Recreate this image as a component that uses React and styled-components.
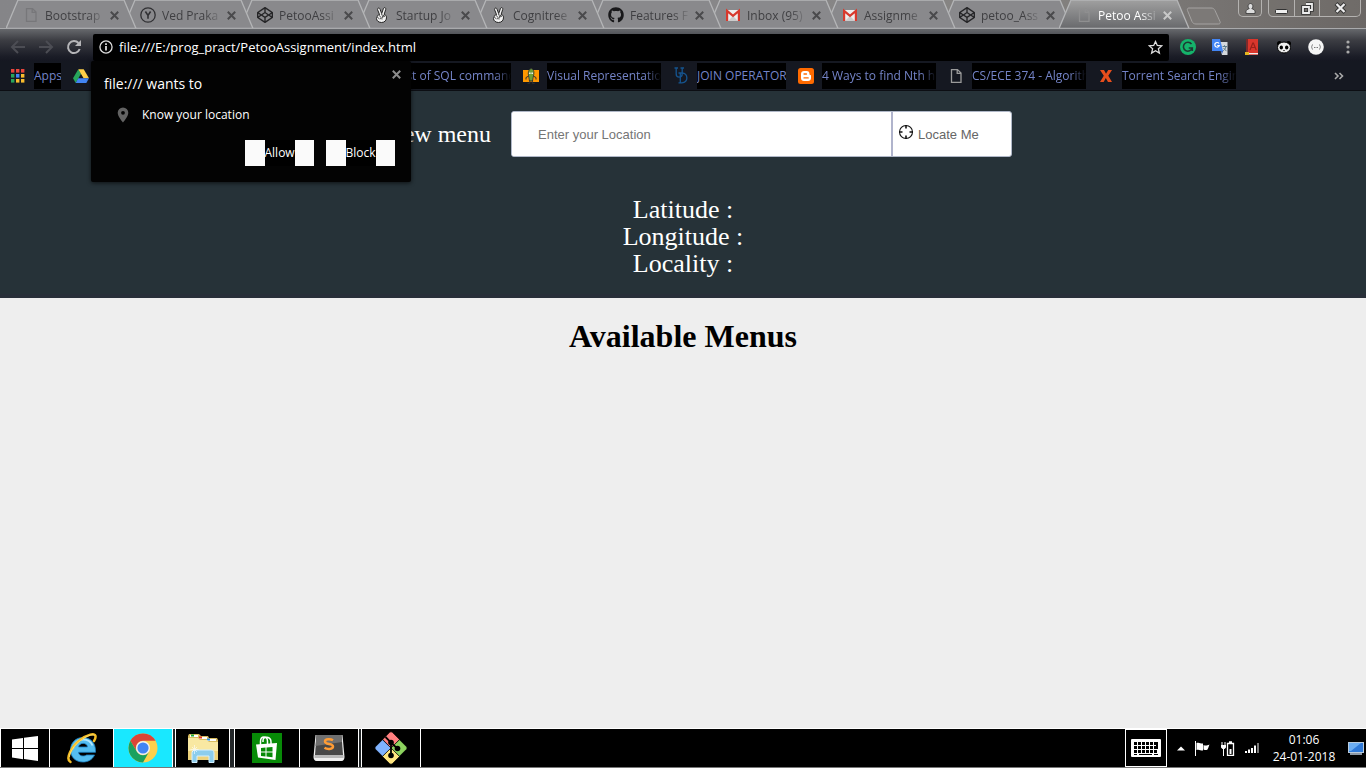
import React from "react";
import styled, { createGlobalStyle } from "styled-components";
import { FaGithub, FaCodepen } from "react-icons/fa";

const UI = `"Open Sans", "Noto Sans", sans-serif`;
const SERIF = `"Liberation Serif", "Times New Roman", serif`;
const SANS = `"Liberation Sans", Arial, sans-serif`;

const Global = createGlobalStyle`
  * { box-sizing: border-box; }
  body { margin: 0; background: #eeeeee; }
  button { border: 0; padding: 0; margin: 0; background: none; font: inherit; color: inherit; cursor: pointer; }
  a { color: inherit; text-decoration: none; }
  svg { display: block; flex: none; }
`;

const Screen = styled.div`
  display: flex;
  flex-direction: column;
  min-height: 100vh;
  overflow: hidden;
`;

/* ---------- browser window ---------- */

const BrowserChrome = styled.header`
  position: relative;
  font-family: ${UI};
  font-size: 12px;
`;

const TabStrip = styled.nav`
  display: flex;
  height: 29px;
  padding-left: 6px;
  background: linear-gradient(90deg, #858588, #89898d 40%, #858381 75%, #6b6765);
  border-bottom: 1px solid #a9aaac;
  overflow: hidden;
`;

const TabItem = styled.div`
  position: relative;
  z-index: ${(p) => p.$z};
  display: flex;
  align-items: center;
  flex: none;
  width: 117px;
  height: 29px;
  padding: 1px 4px 0 17px;
  color: ${(p) => (p.$active ? "#ffffff" : "#3f3f42")};
`;

const TabShape = styled.svg`
  position: absolute;
  left: 0;
  top: 0;
  z-index: -1;
`;

const TabLink = styled.a`
  display: flex;
  align-items: center;
  flex: 1;
  gap: 6px;
  min-width: 0;
`;

const FadeText = styled.span`
  flex: 1;
  min-width: 0;
  white-space: nowrap;
  overflow: hidden;
  mask-image: linear-gradient(90deg, #000 70%, transparent);
`;

const CloseButton = styled.button`
  display: flex;
  margin-left: 4px;
  color: ${(p) => p.$tone || "#4a4a4c"};
`;

const NewTab = styled.button`
  margin: 7px 0 0 10px;
  align-self: flex-start;
`;

const WindowControls = styled.div`
  display: flex;
  align-items: flex-start;
  gap: 6px;
  margin-left: auto;
  padding-right: 5px;
`;

const ControlGroup = styled.div`
  display: flex;
  height: 17px;
  border: 1px solid #b4b2b0;
  border-top: 0;
  border-radius: 0 0 5px 5px;
  background: #77746f55;
`;

const ControlButton = styled.button`
  display: flex;
  align-items: center;
  justify-content: center;
  width: ${(p) => p.$w}px;
  & + & { border-left: 1px solid #b4b2b0; }
`;

const Toolbar = styled.div`
  display: flex;
  align-items: center;
  height: 32px;
  padding: 4px 10px 0;
  background: linear-gradient(#66686c, #3c3d43 35%, #1b1d27 85%, #151721);
`;

const NavButtons = styled.div`
  display: flex;
  align-items: center;
  gap: 12px;
  width: 83px;
`;

const AddressBar = styled.form`
  display: flex;
  align-items: center;
  gap: 6px;
  flex: 1;
  height: 27px;
  padding: 0 6px;
  background: #000;
  border-radius: 2px;
`;

const AddressInput = styled.input`
  flex: 1;
  min-width: 0;
  height: 24px;
  padding: 0;
  border: 0;
  outline: 0;
  background: transparent;
  color: #fff;
  font: 13px ${UI};
`;

const Extensions = styled.div`
  display: flex;
  gap: 16px;
  padding-left: 11px;
`;

const BookmarkBar = styled.nav`
  display: flex;
  align-items: center;
  gap: 12px;
  height: 30px;
  padding: 0 22px 0 9px;
  background: #151821;
  border-bottom: 1px solid #0c0e13;
  color: #7484c8;
`;

const Bookmark = styled.a`
  display: flex;
  align-items: center;
  gap: 8px;
  flex: none;
`;

const BookmarkTitle = styled.span`
  display: flex;
  width: ${(p) => p.$w}px;
  height: 26px;
  line-height: 26px;
  background: ${(p) => (p.$blank ? "transparent" : "#000")};
`;

const BookmarkText = styled(FadeText)`
  mask-image: ${(p) => (p.$fade ? "linear-gradient(90deg, #000 86%, transparent)" : "none")};
`;

const Overflow = styled.button`
  margin-left: auto;
`;

/* ---------- location permission bubble ---------- */

const Bubble = styled.section`
  position: absolute;
  z-index: 20;
  top: 61px;
  left: 91px;
  width: 320px;
  height: 121px;
  padding: 12px 16px 16px 13px;
  display: flex;
  flex-direction: column;
  background: #030303;
  border-radius: 2px;
  box-shadow: 0 1px 4px #000000aa;
  color: #fff;
`;

const BubbleClose = styled.button`
  position: absolute;
  top: 9px;
  right: 10px;
  color: #8c8c8c;
`;

const BubbleTitle = styled.h2`
  margin: 0;
  font-size: 14px;
  font-weight: 400;
  line-height: 22px;
`;

const Permission = styled.p`
  display: flex;
  align-items: center;
  gap: 13px;
  margin: 12px 0 0 13px;
  line-height: 16px;
`;

const BubbleActions = styled.div`
  display: flex;
  justify-content: flex-end;
  gap: 12px;
  margin-top: auto;
`;

const BubbleButton = styled.button`
  display: flex;
  justify-content: center;
  width: 69px;
  height: 26px;
  line-height: 26px;
  background: #fafafa;
  span { background: #000; width: 30px; text-align: center; }
`;

/* ---------- web page ---------- */

const Hero = styled.section`
  display: flex;
  flex-direction: column;
  align-items: center;
  gap: 39px;
  padding: 20px 16px 17px;
  background: #263238;
  border-bottom: 4px solid #282f39;
  color: #fff;
  font-family: ${SERIF};
`;

const SearchForm = styled.form`
  display: flex;
  align-items: center;
  gap: 20px;
`;

const SearchLabel = styled.label`
  min-width: 137px;
  font-size: 24px;
  line-height: 46px;
  text-align: right;
`;

const SearchGroup = styled.div`
  display: flex;
  height: 46px;
  border: 1px solid #b0b8c8;
  border-radius: 3px;
  background: #fff;
  overflow: hidden;
`;

const LocationInput = styled.input`
  width: 379px;
  padding: 0 26px;
  border: 0;
  outline: 0;
  font: 13px ${SANS};
  &::placeholder { color: #757575; opacity: 1; }
`;

const LocateButton = styled.button`
  display: flex;
  align-items: center;
  gap: 4px;
  width: 120px;
  padding-left: 5px;
  border-left: 2px solid #b0b4cc;
  color: #666;
  font: 13px ${SANS};
  svg { margin-bottom: 4px; }
`;

const Facts = styled.ul`
  list-style: none;
  margin: 0;
  padding: 0;
  font-size: 26px;
  line-height: 27px;
  text-align: center;
`;

const Menus = styled.main`
  flex: 1;
  padding-top: 20px;
  background: #eeeeee;
`;

const MenusTitle = styled.h1`
  margin: 0;
  font: 700 32px/37px ${SERIF};
  color: #000;
  text-align: center;
`;

/* ---------- desktop taskbar ---------- */

const Taskbar = styled.footer`
  display: flex;
  height: 40px;
  border-top: 1px solid #fff;
  border-bottom: 1px solid #777;
  background: #000;
  color: #fff;
  font-family: ${UI};
`;

const TaskButton = styled.button`
  display: flex;
  align-items: center;
  justify-content: center;
  width: ${(p) => p.$w}px;
  margin-left: ${(p) => p.$gap || 0}px;
  background: ${(p) => p.$bg || "#000"};
  border-right: 1px solid #fff;
  border-left: ${(p) => (p.$left ? "1px solid #fff" : "0")};
  box-shadow: ${(p) => (p.$gap ? `-${p.$gap}px 0 #222628` : "none")};
`;

const Tray = styled.div`
  display: flex;
  align-items: center;
  gap: 10px;
  margin-left: auto;
  padding-right: 2px;
`;

const KeyboardButton = styled.button`
  display: flex;
  align-items: center;
  justify-content: center;
  width: 42px;
  height: 38px;
  border: 1px solid #fff;
`;

const Clock = styled.time`
  width: 68px;
  font-size: 12px;
  line-height: 17px;
  text-align: center;
`;

/* ---------- icons ---------- */

const Cross = ({ size = 9, w = 2 }) => (
  <svg width={size} height={size} viewBox="0 0 9 9" stroke="currentColor" strokeWidth={w}>
    <path d="M.8.8l7.4 7.4M8.2.8L.8 8.2" />
  </svg>
);
const Page = ({ c = "#9a9a9a" }) => (
  <svg width="16" height="16" viewBox="0 0 16 16" fill="none" stroke={c} strokeWidth="1.3">
    <path d="M3.5 1.6h6l3.5 3.5v9.3H3.5zM9.2 1.8v3.6h3.6" />
  </svg>
);
const YMark = () => (
  <svg width="16" height="16" viewBox="0 0 16 16" fill="none" stroke="#303033" strokeWidth="1.3">
    <circle cx="8" cy="8" r="7.2" />
    <path d="M5.4 4.5L8 8.4l2.6-3.9M8 8.2v3.6" strokeWidth="1.6" />
  </svg>
);
const Peace = () => (
  <svg width="16" height="16" viewBox="0 0 16 16" fill="#f2f2f2" stroke="#252525" strokeWidth="1" strokeLinejoin="round">
    <path d="M4.200 1.200c1-.5 1.500.1 1.900 1.200l1.600 4.200 1.600-4.700c.4-1.100 1-1.500 1.800-1.100.8.300.8 1.100.5 2L10.100 7.500c1.500.3 2.300 1.200 2.400 2.600.200 3-1.700 5.400-5 5.400-2.800 0-5-1.800-5-3.900 0-.8.300-1.400.9-1.700-.5-.9 0-1.700 1-1.900l1.200-.3L3.700 3c-.3-.8-.200-1.500.5-1.800z" />
    <path d="M3.400 10l2.200 2.300M5 8.200l2 2.300c.5.800-.4 1.500-1 .8M7 7.500l3.500 1.400c.6 1-1.500 1-2.500.5M9 10c-1 .6-1.300 1.500-1 2.500" fill="none" strokeWidth=".8" />
  </svg>
);
const Gmail = () => (
  <svg width="16" height="16" viewBox="0 0 16 16">
    <path fill="#eee" d="M1 3h14v11H1z" />
    <path fill="#ccc" d="M3 14l5-5 5 5z" />
    <path fill="none" stroke="#d8392d" strokeWidth="2.2" d="M2.1 14V3.8L8 8.8l5.9-5V14" />
  </svg>
);
const Drive = () => (
  <svg width="16" height="16" viewBox="0 0 16 16">
    <path fill="#27a45b" d="M5.3 1.2L0 10.3l2.7 4.6L8 5.8z" />
    <path fill="#ffcf48" d="M5.3 1.2h5.4l5.3 9.1h-5.4z" />
    <path fill="#4285f4" d="M5.3 10.3H16l-2.7 4.6H2.7z" />
  </svg>
);
const Apps = () => {
  const colors = ["#e8453c", "#e8453c", "#e8453c", "#27a45b", "#4285f4", "#f9bb2d", "#27a45b", "#f9bb2d", "#f9bb2d"];
  return (
    <svg width="17" height="16" viewBox="0 0 17 16">
      {colors.map((c, i) => (
        <rect key={i} x={2 + (i % 3) * 5} y={1 + Math.floor(i / 3) * 5} width="3.4" height="3.6" fill={c} />
      ))}
    </svg>
  );
};
const Mascot = () => (
  <svg width="16" height="16" viewBox="0 0 16 16">
    <path fill="#ff9800" d="M0 2h16v12H0z" />
    <path fill="#6d9f38" stroke="#333" strokeWidth=".8" d="M8 .6c3 .6 3.5 4 2.4 7.4L9.5 13h-3L5.6 8C4.7 4.5 5.5 1.5 8 .6z" />
    <path stroke="#333" fill="none" d="M5.8 8L3 9.500v2M10.200 8l2.800 1.500v2M6.800 12v3.300H4.500M9.300 12v3.300h2.300" />
    <path fill="#eee" d="M6 4.500h1.600v1.600H6zM8.400 4.500H10v1.600H8.400z" />
  </svg>
);
const UDMark = () => (
  <svg width="16" height="17" viewBox="0 0 16 17" fill="none" stroke="#15548f" strokeWidth="1.3">
    <path d="M1.500 1h3.500M7.500 1H11M3.200 1v6c0 4.200 6 4.200 6 0V1" />
    <path d="M5.500 6h3.500c6.500 0 6.500 9.800 0 9.800H5.500M7.300 6v9.800" />
  </svg>
);
const Blogger = () => (
  <svg width="16" height="16" viewBox="0 0 16 16">
    <rect width="16" height="16" rx="2.5" fill="#ff6a00" />
    <path fill="#fff" d="M6 3h2.800C10.600 3 11.500 4.300 11.500 6c0 .8.3 1 1 1 .4 0 .5.3.5.700V10c0 1.900-1.200 3-3 3H6c-1.900 0-3-1.200-3-3V6c0-1.800 1.200-3 3-3z" />
    <path stroke="#ff6a00" strokeWidth="1.3" strokeLinecap="round" d="M6 6h2.500M6 9.900h4.200" />
  </svg>
);
const RedX = () => (
  <svg width="16" height="16" viewBox="0 0 16 16">
    <path fill="#e84e1c" d="M2 2h4l2 3.700L10.200 2H14l-3.700 5.800L14 14h-4l-2.200-4L5.700 14H2l3.800-6.200z" />
  </svg>
);
const Arrow = ({ flip }) => (
  <svg width="16" height="16" viewBox="0 0 16 16" fill="none" stroke="#4c4d54" strokeWidth="2">
    <path d={flip ? "M1 8h13M8 2l6 6-6 6" : "M15 8H2M8 2L2 8l6 6"} />
  </svg>
);
const Reload = () => (
  <svg width="16" height="16" viewBox="0 0 16 16" fill="none" stroke="#b5b5b8" strokeWidth="2">
    <path d="M13.700 10A6 6 0 1 1 12.500 4" />
    <path d="M15 1v6H9z" fill="#b5b5b8" stroke="none" />
  </svg>
);
const Info = () => (
  <svg width="14" height="14" viewBox="0 0 15 15" fill="none" stroke="#ddd">
    <circle cx="7.500" cy="7.500" r="6.500" strokeWidth="1.400" />
    <path d="M7.500 6.500v4.800M7.500 3.500v1.800" strokeWidth="1.900" />
  </svg>
);
const Star = () => (
  <svg width="15" height="15" viewBox="0 0 15 15" fill="none" stroke="#ddd" strokeWidth="1.300">
    <path d="M7.500 1.500l1.800 4 4.400.400-3.300 2.900 1 4.300-3.900-2.300-3.900 2.300 1-4.300L1.300 5.900l4.400-.4z" />
  </svg>
);
const Grammarly = () => (
  <svg width="16" height="16" viewBox="0 0 16 16" fill="none">
    <circle cx="8" cy="8" r="8" fill="#15b36b" />
    <path d="M11.500 5A4.500 4.500 0 1 0 12.200 9H8.700M12.300 9v3" stroke="#1c3a33" strokeWidth="1.600" />
  </svg>
);
const Translate = () => (
  <svg width="16" height="16" viewBox="0 0 16 16" fill="none">
    <path d="M6 3h9.500v13H10z" fill="#d5d8dc" />
    <path d="M0 0h8l3 12H0z" fill="#4285f4" />
    <path d="M9 12h2l-1 3z" fill="#2457b5" />
    <path d="M7 4.500A2.300 2.300 0 1 0 7.300 6.500H5.200" stroke="#fff" strokeWidth="1.200" />
    <path d="M10.500 7.500h4.500M12.500 6.200v1.300M14 7.500c-.5 2.500-2 3.800-3 4.500M11.500 9l3 3.200" stroke="#607d8b" />
  </svg>
);
const Dictionary = () => (
  <svg width="16" height="16" viewBox="0 0 16 16" fill="none">
    <path d="M2 0h12v16H2z" fill="#d9362c" />
    <path d="M2 0h2v14H2z" fill="#7d2b2b" />
    <path d="M4 14h10v1.300H4z" fill="#eee" />
    <path d="M1 13h4v3H1z" fill="#e6b720" />
    <path d="M6 11l2.800-7h.6l2.800 7M7 8.500h4" stroke="#992019" strokeWidth="1.200" />
  </svg>
);
const Panda = () => (
  <svg width="16" height="16" viewBox="0 0 16 16">
    <circle cx="3.500" cy="4.500" r="2.500" fill="#000" />
    <circle cx="12.500" cy="4.500" r="2.500" fill="#000" />
    <ellipse cx="8" cy="8.500" rx="6.500" ry="5.500" fill="#eee" stroke="#000" />
    <ellipse cx="5.300" cy="8.500" rx="1.700" ry="2" fill="#000" />
    <ellipse cx="10.700" cy="8.500" rx="1.700" ry="2" fill="#000" />
    <path d="M7 11h2l-1 1.300z" fill="#000" />
  </svg>
);
const Json = () => (
  <svg width="16" height="16" viewBox="0 0 16 16" fill="none">
    <circle cx="8" cy="8" r="7.800" fill="#f5f5f5" />
    <path d="M5 5.500c-1.500 0-.5 2.500-1.700 2.500 1.200 0 .2 2.500 1.700 2.500M11 5.500c1.500 0 .5 2.500 1.700 2.500-1.200 0-.2 2.500-1.700 2.500" stroke="#777" strokeWidth=".9" />
    <path d="M6 8.500h4" stroke="#777" strokeDasharray="1 .5" />
  </svg>
);
const Dots = () => (
  <svg width="16" height="16" viewBox="0 0 16 16" fill="#aaa">
    <circle cx="8" cy="3" r="1.600" />
    <circle cx="8" cy="8" r="1.600" />
    <circle cx="8" cy="13" r="1.600" />
  </svg>
);
const Pin = () => (
  <svg width="12" height="16" viewBox="0 0 12 16">
    <path fill="#636363" fillRule="evenodd" d="M6 .5A5.300 5.300 0 0 0 .7 5.800C.7 9.700 6 15.500 6 15.500s5.300-5.800 5.300-9.700A5.300 5.300 0 0 0 6 .5zm0 3.400a1.900 1.900 0 1 1 0 3.800 1.900 1.900 0 0 1 0-3.800z" />
  </svg>
);
const Crosshair = () => (
  <svg width="16" height="16" viewBox="0 0 16 16" fill="none" stroke="#111">
    <circle cx="8" cy="8" r="6.500" strokeWidth="1.100" />
    <path d="M8 1v3.500M8 11.500V15M1 8h3.500M11.500 8H15" strokeWidth="1.600" />
  </svg>
);

const Windows = () => (
  <svg width="26" height="25" viewBox="0 0 26 25" fill="#fff">
    <path d="M0 3.600L11 2v10H0zM12 1.800L26 0v12H12zM0 13h11v10.200L0 21.600zM12 13h14v12l-14-1.900z" />
  </svg>
);
const Explorer = () => (
  <svg width="32" height="32" viewBox="0 0 32 32" fill="none">
    <path d="M28.500 23c-2 4.500-6.300 7-11.500 7C9.500 30 4.500 25 4.500 18S9.600 5.500 16.800 5.500C24.500 5.500 29.500 10.800 29.500 18.800v1.500H12.500c.3 2.500 2 3.700 4.500 3.700 1.600 0 2.700-.3 3.500-1zM12.500 15h9c-.2-2.200-1.900-3.600-4.300-3.600-2.500 0-4.300 1.300-4.700 3.600z" fill="#54bdf0" stroke="#1c83c5" strokeWidth=".8" fillRule="evenodd" />
    <path d="M7 17c1-5.500 5-9.500 10-9.500 4.500 0 8 2.300 9.500 6" stroke="#b5e8ff" strokeWidth="1.800" />
    <path d="M4.500 30C-1 27 5.500 14.500 14 8 21 2.500 29 .5 29.500 4c.2 1.500-.5 3.500-1.500 5" stroke="#f5bd25" strokeWidth="2.500" strokeLinecap="round" />
    <path d="M3.500 25c0-5 5-12 11-16.500C20 4.200 26 2 28.300 3.300" stroke="#ffe680" strokeWidth=".8" />
  </svg>
);
const Chrome = () => (
  <svg width="30" height="30" viewBox="0 0 30 30">
    <circle cx="15" cy="15" r="14.500" fill="#fcd04b" />
    <path fill="#db4437" d="M2.400 7.800A14.500 14.500 0 0 1 27.600 7.800H15A7.200 7.200 0 0 0 8.800 18.600z" />
    <path fill="#19a15f" d="M2.400 7.800A14.500 14.500 0 0 0 15 29.500l6.200-10.900A7.200 7.200 0 0 1 8.800 18.600z" />
    <circle cx="15" cy="15" r="7" fill="#f1f1f1" />
    <circle cx="15" cy="15" r="5.600" fill="#4285f4" />
  </svg>
);
const Folder = () => (
  <svg width="32" height="30" viewBox="0 0 32 30">
    <path fill="#d9bd60" d="M1 3L2 1h10l2 2h7l1 2h8l1 2v20H1z" />
    <path fill="#fff" d="M3 2h8v2H3zM12 4h8v2h-8zM20 6h9v2h-9z" />
    <path fill="#1faa3a" d="M4 1.500h3v2H4z" />
    <path fill="#e13b26" d="M12 3.500h3v2h-3z" />
    <path fill="#2e94e6" d="M20 5.500h3v2h-3z" />
    <path fill="#f9e8a2" d="M1 5h10l2 2h7l2 2h9v17.500H1z" />
    <path fill="#edd27a" d="M1 18h30v8.500H1z" />
    <path fill="#8ccdec" stroke="#d3f0ff" d="M5 29.500V20c0-2 1-3 3-3h16c2 0 3 1 3 3v9.500h-5V23H10v6.500z" />
    <path stroke="#fff" d="M7.500 12v9M3.500 16.500h8M5 14l5 5M10 14l-5 5" opacity=".6" />
  </svg>
);
const Store = () => (
  <svg width="30" height="30" viewBox="0 0 30 30">
    <path fill="#078a07" d="M0 0h30v30H0z" />
    <path fill="none" stroke="#fff" strokeWidth="1.500" d="M8.500 12V8.500c0-6 7-6 7 0V11M11 9V7.500c0-5 8-4 8 1.500V11" />
    <path fill="#fff" d="M4 11.500l21-1.500-1.500 17L6 24.500z" />
    <path fill="#078a07" d="M9 15l4.500-.5v4H9zM14.500 14.400l6-.5v4.600h-6zM9 19.500h4.500v4L9 23zM14.500 19.500h6v4.700l-6-.6z" />
  </svg>
);
const Sublime = () => (
  <svg width="32" height="28" viewBox="0 0 32 28" fill="none">
    <path d="M2.500 1h27l2 22c0 2-1 4-3 4h-25c-2 0-3-2-3-4z" fill="#f0f0f0" />
    <path d="M1.500 21h29v3h-29z" fill="#b9b9b9" />
    <path d="M3.500 1h25l1.500 20H2z" fill="#484848" />
    <path d="M3.500 1h25l.5 7-26.500 4z" fill="#707070" />
    <path d="M20 6.200c-2-1.200-8-1.700-8 1.300 0 3.500 8 1.500 8 5 0 3.200-6.300 2.800-8.500 1.300" stroke="#ff9c35" strokeWidth="2.500" />
  </svg>
);
const Git = () => (
  <svg width="34" height="34" viewBox="0 0 34 34">
    <g stroke="#000" strokeWidth=".6" strokeLinejoin="round">
      <path fill="#ff7f7f" d="M15.500 1.500q1.500-1.500 3 0l7 7L17 17 8.700 8.500z" />
      <path fill="#80b3ff" d="M8.500 8.700L17 17l-8.500 8.300-7-7q-1.300-1.300 0-2.600z" />
      <path fill="#8dd35f" d="M25.500 8.700l7 7q1.300 1.300 0 2.600l-7 7L17 17z" />
      <path fill="#ffe680" d="M17 17l8.500 8.500-7 7q-1.500 1.500-3 0l-7-7z" />
    </g>
    <path stroke="#000" strokeWidth="1.800" fill="none" d="M11.500 6l5.500 5.500V25M17 12l6 5" />
    <circle cx="17" cy="11.500" r="2.800" />
    <circle cx="23.500" cy="17.500" r="2.800" />
    <circle cx="17" cy="24.500" r="2.800" />
  </svg>
);
const Keyboard = () => (
  <svg width="30" height="18" viewBox="0 0 30 18">
    <rect width="30" height="18" rx="1" fill="#fff" />
    <g fill="#000">
      {[0, 1, 2].map((r) =>
        [0, 1, 2, 3, 4, 5].map((c) => <rect key={`${r}${c}`} x={3 + c * 4} y={3 + r * 4} width="3" height="3" />)
      )}
      <path d="M25 3h2v7h-3V7h1zM3 15h3v1H3zM8 15h13v1H8zM23 15h4v1h-4z" />
    </g>
  </svg>
);
const Flag = () => (
  <svg width="15" height="15" viewBox="0 0 15 15">
    <path fill="#fff" d="M0 0h1v15H0zM1.500 2c2.500-1 3.500.5 6.500.5v7c-3 0-4-1.500-6.500-.5zM8.500 4c2 1 3.500.5 6-.5-1 2-1 3.500-2 5-1.500 1-2.500.5-4 0z" />
  </svg>
);
const Battery = () => (
  <svg width="15" height="15" viewBox="0 0 15 15" fill="none" stroke="#fff">
    <path d="M7.500 2.500h6v12h-6zM9 1h3" strokeWidth="1.300" />
    <path d="M2 1v3M5 1v3M3.500 7v8" />
    <path d="M1 4h5v2.500L4.500 8h-2L1 6.500zM9.500 8h2v5h-2z" fill="#fff" stroke="none" />
  </svg>
);
const Signal = () => (
  <svg width="15" height="12" viewBox="0 0 15 12" fill="#fff">
    <path d="M0 9h2v2H0zM3 7.500h2V11H3zM6 6h2v5H6zM9 3.500h2V11H9z" />
    <path d="M12 1h2v10h-2z" fill="#777" />
  </svg>
);
const Monitor = () => (
  <svg width="16" height="13" viewBox="0 0 16 13">
    <path fill="#b9cbdc" d="M0 0h16v11H0z" />
    <path fill="#2e79d8" d="M1 1h14v9H1z" />
    <path fill="#6badf2" d="M1 1h12L3 9H1z" />
    <path fill="#8d98a5" d="M2 11h12v2H2z" />
  </svg>
);

/* ---------- data ---------- */

const pen = <FaCodepen size={16} color="#252527" />;
const tabs = [
  ["Bootstrap", <Page c="#77777a" />],
  ["Ved Praka", <YMark />],
  ["PetooAssi", pen],
  ["Startup Jo", <Peace />],
  ["Cognitree", <Peace />],
  ["Features F", <FaGithub size={16} color="#18181a" />],
  ["Inbox (95)", <Gmail />],
  ["Assignme", <Gmail />],
  ["petoo_Ass", pen],
  ["Petoo Assi", <Page c="#8f8f90" />],
];

const bookmarks = [
  ["Apps", <Apps />, 27],
  ["", <Drive />, 114],
  ["", <Page />, 114],
  ["List of SQL command", <Page />, 114],
  ["Visual Representation", <Mascot />, 114],
  ["JOIN OPERATOR", <UDMark />, 89],
  ["4 Ways to find Nth hi", <Blogger />, 114],
  ["CS/ECE 374 - Algorith", <Page />, 114],
  ["Torrent Search Engine", <RedX />, 114],
];

const extensions = [
  ["Grammarly", <Grammarly />],
  ["Translate", <Translate />],
  ["Dictionary", <Dictionary />],
  ["Panda", <Panda />],
  ["JSON", <Json />],
  ["Menu", <Dots />],
];

function Tab({ title, icon, active, z }) {
  return (
    <TabItem $active={active} $z={z}>
      <TabShape width="132" height="29" viewBox="0 0 132 29">
        <path d="M0 28.500L12 0h106l12 28.500z" fill={active ? "url(#activeTab)" : "#89898c"} stroke="#b4b5b7" strokeWidth="1.300" />
      </TabShape>
      <TabLink href="#" aria-label={title}>
        {icon}
        <FadeText>{title}</FadeText>
      </TabLink>
      <CloseButton aria-label="Close tab" $tone={active && "#c8c8c8"}>
        <Cross />
      </CloseButton>
    </TabItem>
  );
}

export default function App() {
  return (
    <Screen>
      <Global />
      <BrowserChrome>
        <TabStrip>
          <svg width="0" height="0">
            <linearGradient id="activeTab" x1="0" y1="0" x2="0" y2="1">
              <stop offset="0" stopColor="#a0a0a0" />
              <stop offset="1" stopColor="#68696c" />
            </linearGradient>
          </svg>
          {tabs.map(([title, icon], i) => (
            <Tab key={i} title={title} icon={icon} active={i === 9} z={i === 9 ? 12 : 10 - i} />
          ))}
          <NewTab aria-label="New tab">
            <svg width="36" height="18" viewBox="0 0 36 18">
              <path d="M3 1h22c2 0 3 .7 4 2.500l5 11c.6 1.500 0 2.500-1.500 2.500H10c-2 0-3-.7-4-2.500L1.500 3.500C1 2 1.500 1 3 1z" fill="#7c7977" stroke="#a5a3a2" />
            </svg>
          </NewTab>
          <WindowControls>
            <ControlGroup>
              <ControlButton $w={22} aria-label="Profile">
                <svg width="11" height="11" viewBox="0 0 11 11" fill="#ddd" stroke="#333" strokeWidth=".8">
                  <path d="M1 10.500V8.500c0-1.500 2-2.500 3.200-2.800C2 3.500 3.500.5 5.500.5s3.500 3 1.300 5.200C8 6 10 7 10 8.500v2z" />
                </svg>
              </ControlButton>
            </ControlGroup>
            <ControlGroup>
              <ControlButton $w={25} aria-label="Minimize">
                <svg width="13" height="13" viewBox="0 0 13 13">
                  <rect x=".5" y="7.500" width="12" height="4" rx="1" fill="#eee" stroke="#333" />
                </svg>
              </ControlButton>
              <ControlButton $w={25} aria-label="Restore">
                <svg width="13" height="13" viewBox="0 0 13 13" fill="none">
                  <path d="M5 2h6v6H9M2 5h6v6H2z" stroke="#333" strokeWidth="3.600" />
                  <path d="M5 2h6v6H9M2 5h6v6H2z" stroke="#eee" strokeWidth="1.800" />
                </svg>
              </ControlButton>
              <ControlButton $w={41} aria-label="Close">
                <svg width="13" height="12" viewBox="0 0 13 12" fill="none">
                  <path d="M2 1.500l9 9M11 1.500l-9 9" stroke="#333" strokeWidth="4" />
                  <path d="M2.500 2l8 8M10.500 2l-8 8" stroke="#eee" strokeWidth="2.300" />
                </svg>
              </ControlButton>
            </ControlGroup>
          </WindowControls>
        </TabStrip>
        <Toolbar>
          <NavButtons>
            <button aria-label="Back"><Arrow /></button>
            <button aria-label="Forward"><Arrow flip /></button>
            <button aria-label="Reload"><Reload /></button>
          </NavButtons>
          <AddressBar>
            <Info />
            <AddressInput aria-label="Address" defaultValue="file:///E:/prog_pract/PetooAssignment/index.html" />
            <button type="button" aria-label="Bookmark this page"><Star /></button>
          </AddressBar>
          <Extensions>
            {extensions.map(([name, icon]) => (
              <button key={name} aria-label={name}>{icon}</button>
            ))}
          </Extensions>
        </Toolbar>
        <BookmarkBar>
          {bookmarks.map(([title, icon, w], i) => (
            <Bookmark key={i} href="#" aria-label={title || "Bookmark"}>
              {icon}
              <BookmarkTitle $w={w} $blank={!title}>
                <BookmarkText $fade={w === 114}>{title}</BookmarkText>
              </BookmarkTitle>
            </Bookmark>
          ))}
          <Overflow aria-label="More bookmarks">
            <svg width="10" height="8" viewBox="0 0 10 8" fill="none" stroke="#aaa" strokeWidth="1.600">
              <path d="M1 1l3 3-3 3M5.500 1l3 3-3 3" />
            </svg>
          </Overflow>
        </BookmarkBar>
        <Bubble>
          <BubbleClose aria-label="Dismiss"><Cross /></BubbleClose>
          <BubbleTitle>file:/// wants to</BubbleTitle>
          <Permission><Pin />Know your location</Permission>
          <BubbleActions>
            <BubbleButton><span>Allow</span></BubbleButton>
            <BubbleButton><span>Block</span></BubbleButton>
          </BubbleActions>
        </Bubble>
      </BrowserChrome>

      <Hero>
        <SearchForm>
          <SearchLabel htmlFor="place">View menu</SearchLabel>
          <SearchGroup>
            <LocationInput id="place" placeholder="Enter your Location" />
            <LocateButton type="button"><Crosshair />Locate Me</LocateButton>
          </SearchGroup>
        </SearchForm>
        <Facts>
          <li>Latitude :</li>
          <li>Longitude :</li>
          <li>Locality :</li>
        </Facts>
      </Hero>
      <Menus>
        <MenusTitle>Available Menus</MenusTitle>
      </Menus>

      <Taskbar>
        <TaskButton $w={50} $left aria-label="Start"><Windows /></TaskButton>
        <TaskButton $w={64} aria-label="Internet Explorer"><Explorer /></TaskButton>
        <TaskButton $w={59} $bg="#19e8ff" aria-label="Chrome"><Chrome /></TaskButton>
        <TaskButton $w={55} $gap={2} $left aria-label="File Explorer"><Folder /></TaskButton>
        <TaskButton $w={66} $gap={4} $left aria-label="Store"><Store /></TaskButton>
        <TaskButton $w={59} aria-label="Sublime Text"><Sublime /></TaskButton>
        <TaskButton $w={60} $gap={2} $left aria-label="Git"><Git /></TaskButton>
        <Tray>
          <KeyboardButton aria-label="Touch keyboard"><Keyboard /></KeyboardButton>
          <svg width="8" height="5" viewBox="0 0 8 5" fill="#fff"><path d="M0 4.500L4 .5l4 4z" /></svg>
          <Flag />
          <Battery />
          <Signal />
          <Clock>01:06<br />24-01-2018</Clock>
          <Monitor />
        </Tray>
      </Taskbar>
    </Screen>
  );
}
